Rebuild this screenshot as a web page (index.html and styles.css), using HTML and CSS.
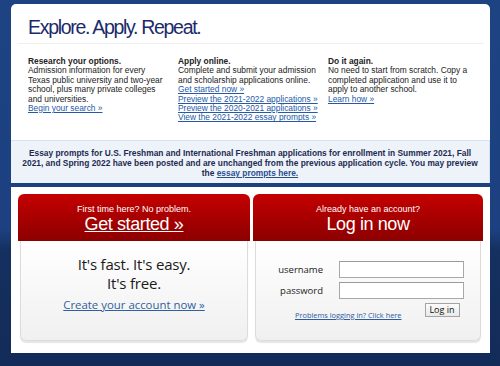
FILE: index.html
```html
<!DOCTYPE html>
<html>
<head>
<meta charset="utf-8">
<link rel="stylesheet" href="styles.css">
</head>
<body>
<div class="page">
  <div class="card">
    <h1 class="title">Explore. Apply. Repeat.</h1>
    <div class="rule"></div>
    <div class="cols">
      <div class="col">
        <div class="col-head">Research your options.</div>
        <div>Admission information for every Texas public university and two-year school, plus many private colleges and universities.</div>
        <a href="#">Begin your search »</a>
      </div>
      <div class="col">
        <div class="col-head">Apply online.</div>
        <div>Complete and submit your admission and scholarship applications online.</div>
        <a href="#">Get started now »</a><br>
        <a href="#">Preview the 2021-2022 applications »</a><br>
        <a href="#">Preview the 2020-2021 applications »</a><br>
        <a href="#">View the 2021-2022 essay prompts »</a>
      </div>
      <div class="col">
        <div class="col-head">Do it again.</div>
        <div>No need to start from scratch. Copy a completed application and use it to apply to another school.</div>
        <a href="#">Learn how »</a>
      </div>
    </div>
    <div class="notice">Essay prompts for U.S. Freshman and International Freshman applications for enrollment in Summer 2021, Fall 2021, and Spring 2022 have been posted and are unchanged from the previous application cycle. You may preview the <a href="#">essay prompts here.</a></div>
  </div>
  <div class="panel">
    <div class="box">
      <div class="box-head">
        <div class="small">First time here? No problem.</div>
        <a class="big link-big" href="#">Get started »</a>
      </div>
      <div class="box-body left-body">
        <div class="pitch">It's fast. It's easy.</div>
        <div class="pitch">It's free.</div>
        <a class="create" href="#">Create your account now »</a>
      </div>
    </div>
    <div class="box">
      <div class="box-head">
        <div class="small">Already have an account?</div>
        <div class="big">Log in now</div>
      </div>
      <div class="box-body right-body">
        <div class="form">
          <label class="lbl">username</label>
          <input class="inp" type="text">
          <label class="lbl">password</label>
          <input class="inp" type="password">
        </div>
        <div class="actions">
          <a class="problems" href="#">Problems logging in? Click here</a>
          <button class="btn">Log in</button>
        </div>
      </div>
    </div>
  </div>
</div>
</body>
</html>
```
FILE: styles.css
```css
html, body {
  margin: 0;
  padding: 0;
}
body {
  width: 500px;
  height: 366px;
  overflow: hidden;
  background: linear-gradient(#1d4382 0px, #1c4080 230px, #15305f 250px, #132b58 366px);
  font-family: "Liberation Sans", Arial, sans-serif;
}
.page {
  padding: 4px 10px 0 11px;
}
.card {
  background: #fff;
  border-radius: 5px 5px 0 0;
  width: 479px;
}
.title {
  margin: 0;
  padding: 12px 0 0 17px;
  height: 27px;
  font-weight: normal;
  font-size: 19.5px;
  line-height: 22px;
  letter-spacing: -1.3px;
  color: #1b2a6b;
}
.rule {
  height: 1px;
  background: #eeeeee;
  margin: 0 6px 0 7px;
}
.cols {
  display: grid;
  grid-template-columns: 139px 139px 144px;
  column-gap: 11px;
  padding: 13px 0 0 17px;
  height: 83px;
  font-size: 8.4px;
  line-height: 9.4px;
  color: #222;
}
.col-head {
  font-weight: bold;
}
.cols a {
  color: #2559a8;
  white-space: nowrap;
}
.notice {
  background: #eef3fa;
  border-top: 1px solid #d6e1f1;
  border-right: 1px solid #d6e1f1;
  height: 43px;
  box-sizing: border-box;
  padding: 7px 10px 0 10px;
  text-align: center;
  font-size: 8.4px;
  line-height: 10px;
  font-weight: bold;
  color: #1e2b50;
}
.notice a {
  color: #2a4f8f;
}
.panel {
  margin-top: 4px;
  background: #fff;
  width: 479px;
  height: 166px;
  box-sizing: border-box;
  padding: 7px 7px 0 7px;
  display: flex;
  gap: 3px;
}
.box {
  width: 232px;
  display: flex;
  flex-direction: column;
}
.box + .box {
  width: 230px;
}
.box-head {
  height: 47px;
  box-sizing: border-box;
  background: linear-gradient(#c50000, #8c0000);
  border-radius: 6px 6px 0 0;
  text-align: center;
  color: #fff;
  padding-top: 10px;
}
.small {
  font-size: 9px;
  line-height: 10px;
}
.big {
  font-size: 18px;
  line-height: 20px;
  letter-spacing: -0.4px;
  color: #fff;
}
.link-big {
  text-decoration: underline;
}
.box-body {
  margin: 0 2px;
  height: 100px;
  box-sizing: border-box;
  border: 1px solid #dcdcdc;
  border-top: none;
  border-radius: 0 0 6px 6px;
  background: linear-gradient(#ffffff, #f0f0f0);
  box-shadow: 0 2px 1px #e6e6e6;
}
.left-body {
  text-align: center;
  padding-top: 14px;
  font-family: "Open Sans", sans-serif;
}
.pitch {
  font-size: 15px;
  line-height: 18.5px;
  color: #1a1a1a;
  letter-spacing: -0.2px;
}
.create {
  display: inline-block;
  margin-top: 1px;
  font-size: 11.4px;
  line-height: 16px;
  color: #2f5fa0;
}
.right-body {
  padding-top: 20px;
  font-family: "Open Sans", sans-serif;
}
.form {
  display: grid;
  grid-template-columns: 67px 125px;
  column-gap: 16px;
  row-gap: 4px;
  align-items: center;
}
.lbl {
  text-align: right;
  font-size: 9.5px;
  color: #222;
}
.inp {
  box-sizing: border-box;
  width: 125px;
  height: 17px;
  margin: 0;
  border: 1px solid #a8a8a8;
  border-top-color: #9a9a9a;
  background: #fff;
}
.actions {
  display: flex;
  align-items: flex-end;
  padding-left: 39px;
  margin-top: 4px;
  gap: 23px;
}
.problems {
  font-size: 7.4px;
  line-height: 9px;
  color: #2c5aa0;
  margin-bottom: -3px;
}
.btn {
  height: 14px;
  width: 35px;
  padding: 0;
  margin: 0;
  border: 1px solid #a4a4a4;
  background: linear-gradient(#fbfbfb, #e9e9e9);
  font-family: "Open Sans", sans-serif;
  font-size: 9px;
  line-height: 12px;
  color: #111;
}
```
